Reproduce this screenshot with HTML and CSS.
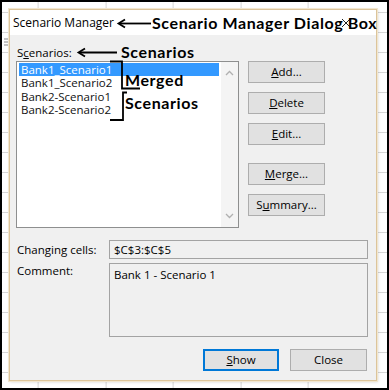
FILE: index.html
```html
<!DOCTYPE html>
<html>
<head>
<meta charset="utf-8">
<link rel="stylesheet" href="styles.css">
</head>
<body>
<div class="screen">
  <svg class="sheet-mark" width="6" height="9" viewBox="0 0 6 9"><path d="M0 1H5M0 4H5M0 7H5" stroke="#8a8a8a" stroke-width="1"/></svg>
  <div class="dialog">
    <div class="titlebar">
      <span class="title">Scenario Manager</span>
      <span class="close-x"><svg width="10" height="10" viewBox="0 0 10 10"><path d="M1 1L9 9M9 1L1 9" stroke="#222" stroke-width="1"/></svg></span>
    </div>
    <div class="body">
      <div class="top">
        <div class="left">
          <div class="label">S<u>c</u>enarios:</div>
          <div class="listbox">
            <ul class="items">
              <li class="selected">Bank1_Scenario1</li>
              <li>Bank1_Scenario2</li>
              <li>Bank2-Scenario1</li>
              <li>Bank2-Scenario2</li>
            </ul>
            <div class="scroll">
              <svg width="9" height="6" viewBox="0 0 9 6"><path d="M1 5L4.5 1.5L8 5" fill="none" stroke="#b0b0b0" stroke-width="1.3"/></svg>
              <svg width="9" height="6" viewBox="0 0 9 6"><path d="M1 1L4.5 4.5L8 1" fill="none" stroke="#b0b0b0" stroke-width="1.3"/></svg>
            </div>
          </div>
        </div>
        <div class="buttons">
          <div class="btn"><u>A</u>dd...</div>
          <div class="btn"><u>D</u>elete</div>
          <div class="btn"><u>E</u>dit...</div>
          <div class="btn gap-big"><u>M</u>erge...</div>
          <div class="btn">S<u>u</u>mmary...</div>
        </div>
      </div>
      <div class="field-row">
        <div class="field-label">Changing cells:</div>
        <div class="input">$C$3:$C$5</div>
      </div>
      <div class="field-row comment-row">
        <div class="field-label">Comment:</div>
        <div class="input comment">Bank 1 - Scenario 1</div>
      </div>
      <div class="footer">
        <div class="btn default"><u>S</u>how</div>
        <div class="btn">Close</div>
      </div>
    </div>
  </div>
  <div class="notes">
    <svg class="note-lines" width="389" height="390" viewBox="0 0 389 390">
      <g fill="none" stroke="#000" stroke-width="1.8">
        <path d="M119 23.5H151"/>
        <path d="M125 19.5L118.5 23.5L125 27.5"/>
        <path d="M79 52.5H117"/>
        <path d="M85 48.5L78.5 52.5L85 56.5"/>
        <path d="M110 61.5H122V88.5H140"/>
        <path d="M127 92.5H123V120H110"/>
      </g>
    </svg>
    <span class="note note-dialog">Scenario Manager Dialog Box</span>
    <span class="note note-scen">Scenarios</span>
    <span class="note note-merged">Merged<br>Scenarios</span>
  </div>
</div>
</body>
</html>
```
FILE: styles.css
```css
html, body {
  margin: 0;
  padding: 0;
}
body {
  width: 389px;
  height: 390px;
  overflow: hidden;
}
.screen {
  position: relative;
  width: 389px;
  height: 390px;
  box-sizing: border-box;
  border: 2px solid #000;
  background-color: #fff;
  background-image:
    repeating-linear-gradient(to bottom, transparent 0 19px, #d6d6d6 19px 20px),
    repeating-linear-gradient(to right, transparent 0 66.4px, #d6d6d6 66.4px 67.4px);
  background-position: 0 -9px, -30.4px 0;
  font-family: "Open Sans", "Noto Sans", sans-serif;
  font-size: 11.5px;
  color: #000;
}
.sheet-mark {
  position: absolute;
  left: 2px;
  top: 36px;
}
.dialog {
  position: absolute;
  left: 7px;
  top: 7px;
  width: 368px;
  height: 372px;
  box-sizing: border-box;
  border: 1px solid #dcc49a;
  box-shadow: 0 0 0 1px #f1e6cf, 1px 1px 3px rgba(0,0,0,0.18);
  background: #f0f0f0;
  display: flex;
  flex-direction: column;
}
.titlebar {
  height: 25px;
  background: #fff;
  display: flex;
  align-items: center;
  justify-content: space-between;
  padding-left: 3px;
  padding-right: 25px;
}
.title {
  font-size: 12px;
  line-height: 14px;
}
.close-x {
  display: flex;
  align-items: center;
}
.body {
  flex: 1;
  padding: 10px 8px 0 6px;
  display: flex;
  flex-direction: column;
}
.top {
  display: flex;
  gap: 9px;
}
.left {
  width: 223px;
  display: flex;
  flex-direction: column;
}
.label {
  height: 16px;
  line-height: 15px;
  padding-left: 1px;
}
.listbox {
  height: 167px;
  box-sizing: border-box;
  border: 1px solid #8e8f8f;
  background: #fff;
  display: flex;
}
.items {
  list-style: none;
  margin: 0;
  padding: 1px 2px 0 2px;
  flex: 1;
}
.items li {
  height: 13.4px;
  line-height: 13.4px;
  padding-left: 2px;
  color: #111;
}
.items li.selected {
  background: #3399ff;
  color: #fff;
}
.scroll {
  width: 17px;
  background: #f4f4f4;
  display: flex;
  flex-direction: column;
  justify-content: space-between;
  align-items: center;
  padding: 8px 0 8px;
}
.buttons {
  padding-top: 16px;
  display: flex;
  flex-direction: column;
  gap: 9px;
}
.btn {
  width: 77px;
  height: 22px;
  box-sizing: border-box;
  border: 1px solid #adadad;
  background: #e1e1e1;
  display: flex;
  align-items: center;
  justify-content: center;
  line-height: 14px;
}
.btn.gap-big {
  margin-top: 9px;
}
.btn u, .label u {
  text-underline-offset: 1px;
}
.field-row {
  display: flex;
  align-items: center;
  margin-top: 12px;
}
.field-row.comment-row {
  align-items: flex-start;
  margin-top: 4px;
}
.field-label {
  width: 93px;
  padding-left: 1px;
  box-sizing: border-box;
  line-height: 16px;
}
.input {
  width: 259px;
  height: 19px;
  box-sizing: border-box;
  border: 1px solid #a3a3a3;
  background: #f0f0f0;
  padding-left: 4px;
  line-height: 17px;
}
.input.comment {
  height: 74px;
  padding-top: 2px;
}
.footer {
  display: flex;
  justify-content: flex-end;
  gap: 11px;
  margin-top: 12px;
  padding-right: 1px;
}
.btn.default {
  width: 76px;
  border: 2px solid #0078d7;
}
.notes {
  position: absolute;
  left: -2px;
  top: -2px;
  width: 389px;
  height: 390px;
  pointer-events: none;
}
.note-lines {
  position: absolute;
  left: 0;
  top: 0;
}
.note {
  position: absolute;
  font-family: Lato, "Open Sans", sans-serif;
  font-weight: 700;
  font-size: 16px;
  line-height: 16px;
  letter-spacing: 0.6px;
  color: #000;
  white-space: nowrap;
}
.note-dialog {
  left: 152px;
  top: 15px;
}
.note-scen {
  left: 121px;
  top: 44px;
}
.note-merged {
  left: 125px;
  top: 68px;
  line-height: 23px;
}
```
